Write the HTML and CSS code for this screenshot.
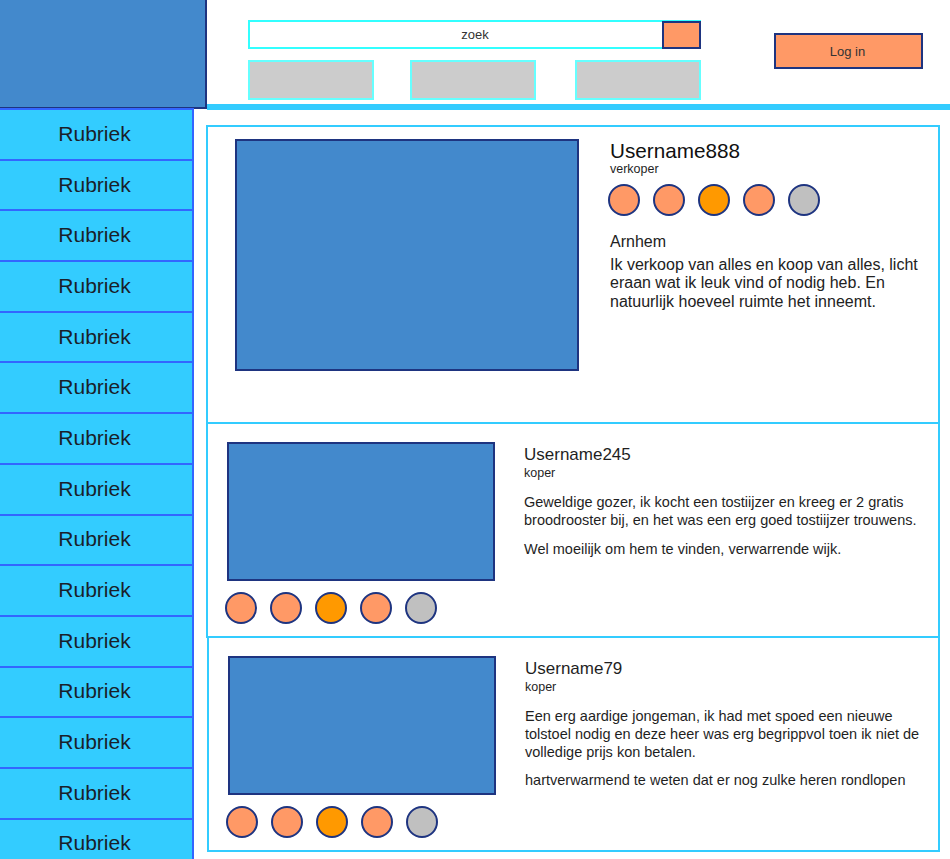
FILE: index.html
```html
<!DOCTYPE html>
<html lang="nl">
<head>
<meta charset="utf-8">
<title>Profiel</title>
<link rel="stylesheet" href="styles.css">
</head>
<body>
<div class="page">
  <header class="header">
    <div class="logo"></div>
    <div class="header-main">
      <div class="search-col">
        <div class="search">
          <span class="search-text">zoek</span>
          <span class="search-btn"></span>
        </div>
        <nav class="nav">
          <span class="nav-btn"></span>
          <span class="nav-btn"></span>
          <span class="nav-btn nav-btn-last"></span>
        </nav>
      </div>
      <div class="login">Log in</div>
    </div>
  </header>
  <div class="body">
    <aside class="sidebar">
      <div class="rubriek">Rubriek</div>
      <div class="rubriek">Rubriek</div>
      <div class="rubriek">Rubriek</div>
      <div class="rubriek">Rubriek</div>
      <div class="rubriek">Rubriek</div>
      <div class="rubriek">Rubriek</div>
      <div class="rubriek">Rubriek</div>
      <div class="rubriek">Rubriek</div>
      <div class="rubriek">Rubriek</div>
      <div class="rubriek">Rubriek</div>
      <div class="rubriek">Rubriek</div>
      <div class="rubriek">Rubriek</div>
      <div class="rubriek">Rubriek</div>
      <div class="rubriek">Rubriek</div>
      <div class="rubriek">Rubriek</div>
    </aside>
    <main class="main">
      <section class="card profile">
        <div class="photo photo-large"></div>
        <div class="profile-info">
          <div class="name-large">Username888</div>
          <div class="role">verkoper</div>
          <div class="rating rating-profile">
            <span class="dot"></span><span class="dot"></span><span class="dot dot-mid"></span><span class="dot"></span><span class="dot dot-off"></span>
          </div>
          <div class="city">Arnhem</div>
          <p class="bio">Ik verkoop van alles en koop van alles, licht eraan wat ik leuk vind of nodig heb. En natuurlijk hoeveel ruimte het inneemt.</p>
        </div>
      </section>
      <section class="card review">
        <div class="review-left">
          <div class="photo photo-small"></div>
          <div class="rating">
            <span class="dot"></span><span class="dot"></span><span class="dot dot-mid"></span><span class="dot"></span><span class="dot dot-off"></span>
          </div>
        </div>
        <div class="review-text">
          <div class="name">Username245</div>
          <div class="role">koper</div>
          <p class="para">Geweldige gozer, ik kocht een tostiijzer en kreeg er 2 gratis broodrooster bij, en het was een erg goed tostiijzer trouwens.</p>
          <p class="para">Wel moeilijk om hem te vinden, verwarrende wijk.</p>
        </div>
      </section>
      <section class="card review review-last">
        <div class="review-left">
          <div class="photo photo-small"></div>
          <div class="rating">
            <span class="dot"></span><span class="dot"></span><span class="dot dot-mid"></span><span class="dot"></span><span class="dot dot-off"></span>
          </div>
        </div>
        <div class="review-text">
          <div class="name">Username79</div>
          <div class="role">koper</div>
          <p class="para">Een erg aardige jongeman, ik had met spoed een nieuwe tolstoel nodig en deze heer was erg begrippvol toen ik niet de volledige prijs kon betalen.</p>
          <p class="para">hartverwarmend te weten dat er nog zulke heren rondlopen</p>
        </div>
      </section>
    </main>
  </div>
</div>
</body>
</html>
```
FILE: styles.css
```css
html, body {
  margin: 0;
  padding: 0;
  overflow: hidden;
  background: #ffffff;
}

body {
  font-family: "Liberation Sans", Arial, sans-serif;
  color: #1f1f1f;
}

* {
  box-sizing: border-box;
}

.page {
  width: 950px;
  height: 859px;
  overflow: hidden;
}

/* Header */
.header {
  display: flex;
  height: 108px;
}

.logo {
  width: 207px;
  height: 109px;
  flex: none;
  background: #4389cc;
  border-right: 2px solid #1e3480;
  border-bottom: 2px solid #1e3480;
}

.header-main {
  flex: 1;
  height: 110px;
  display: flex;
  align-items: flex-start;
  padding-left: 41px;
  border-bottom: 6px solid #33ccff;
}

.search-col {
  width: 453px;
  padding-top: 20px;
}

.search {
  display: grid;
  height: 29px;
  border: 2px solid #33ffff;
}

.search-text,
.search-btn {
  grid-area: 1 / 1;
}

.search-text {
  justify-self: center;
  align-self: center;
  font-size: 13px;
  color: #333333;
  padding-left: 1px;
}

.search-btn {
  justify-self: end;
  width: 39px;
  height: 28px;
  margin: -1px -2px -2px 0;
  background: #ff9966;
  border: 2px solid #1e3480;
}

.nav {
  display: flex;
  gap: 36px;
  margin-top: 11px;
}

.nav-btn {
  width: 126px;
  height: 40px;
  background: #cccccc;
  border: 2px solid #66ffff;
}

.nav-btn-last {
  margin-left: auto;
}

.login {
  margin-left: 73px;
  margin-top: 33px;
  width: 149px;
  height: 36px;
  background: #ff9966;
  border: 2px solid #1e3480;
  display: flex;
  align-items: center;
  justify-content: center;
  font-size: 13px;
  color: #333333;
  padding-right: 2px;
}

/* Body */
.body {
  display: flex;
}

.sidebar {
  width: 194px;
  flex: none;
  border-right: 2px solid #3366ff;
  background: #33ccff;
}

.rubriek {
  height: 50.7px;
  border-top: 2px solid #3366ff;
  display: flex;
  align-items: center;
  justify-content: center;
  font-size: 21px;
  color: #1a1f2a;
  padding-bottom: 1px;
  padding-right: 3px;
}

.main {
  flex: 1;
  padding: 17px 10px 0 12px;
}

.card {
  border: 2px solid #33ccff;
  display: flex;
}

.profile {
  height: 299px;
  padding: 12px 0 0 27px;
}

.photo {
  background: #4389cc;
  border: 2px solid #1e3480;
  flex: none;
}

.photo-large {
  width: 344px;
  height: 232px;
}

.photo-small {
  width: 268px;
  height: 139px;
}

.profile-info {
  margin-left: 31px;
  width: 318px;
}

.name-large {
  font-size: 20.7px;
  line-height: 23px;
  color: #111111;
}

.role {
  font-size: 12.5px;
  line-height: 14px;
  color: #1f1f1f;
}

.rating {
  display: flex;
  gap: 13px;
  margin-left: -2px;
  margin-top: 11px;
}

.rating-profile {
  margin-top: 8px;
}

.dot {
  width: 32px;
  height: 32px;
  border-radius: 50%;
  background: #ff9966;
  border: 2px solid #1e3480;
  flex: none;
}

.dot-mid {
  background: #ff9900;
}

.dot-off {
  background: #c0c0c0;
}

.city {
  margin-top: 17px;
  font-size: 16px;
  line-height: 18.5px;
  color: #222222;
}

.bio {
  margin: 4px 0 0;
  font-size: 16px;
  line-height: 18.5px;
  color: #222222;
}

.review {
  border-top: none;
  height: 214px;
}

.review-last {
  margin-left: 1px;
}

.review-left {
  padding: 18px 0 0 19px;
}

.review-text {
  margin-left: 29px;
  width: 412px;
  padding-top: 21px;
}

.name {
  font-size: 17px;
  line-height: 20px;
  color: #1f1f1f;
}

.review .role {
  margin-top: 1px;
}

.para {
  margin: 14px 0 0;
  font-size: 14.5px;
  line-height: 17.8px;
  color: #1f1f1f;
}

.para + .para {
  margin-top: 11px;
}
```
